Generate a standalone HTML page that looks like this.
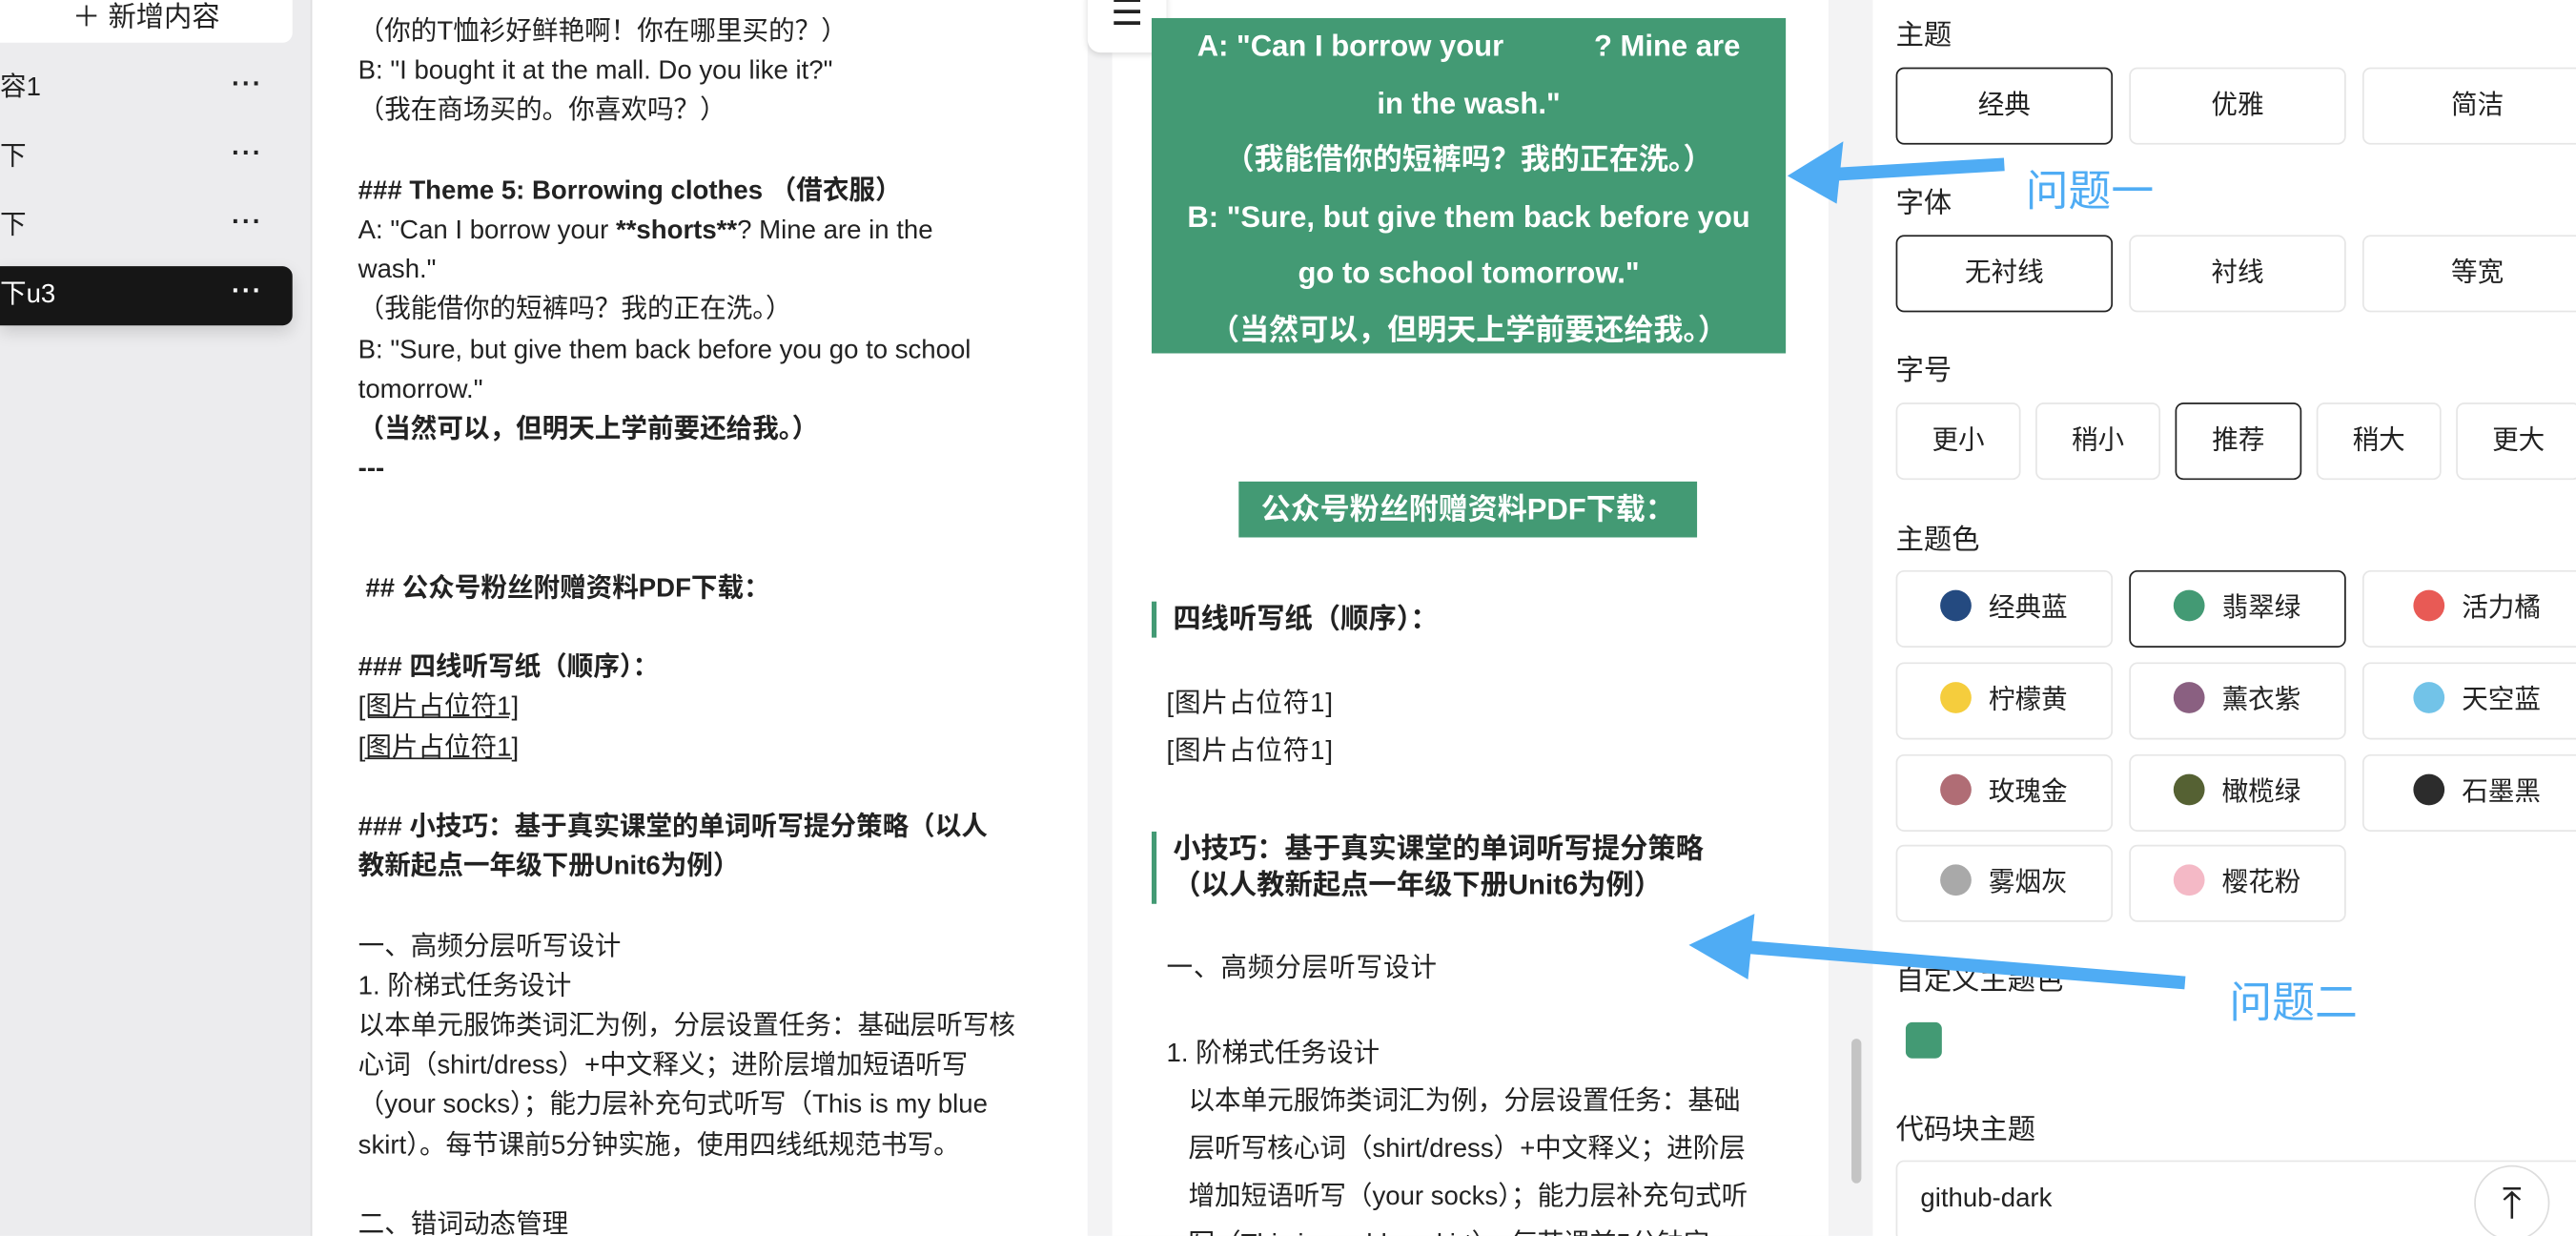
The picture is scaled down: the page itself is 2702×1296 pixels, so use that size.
<!DOCTYPE html>
<html><head><meta charset="utf-8"><style>
*{box-sizing:border-box;margin:0;padding:0}
html,body{width:2702px;height:1296px;overflow:hidden;background:#fff}
#w{width:1568px;height:752px;transform:scale(1.72321);transform-origin:0 0;position:relative;font-family:"Liberation Sans","Noto Sans CJK SC",sans-serif;color:#222}
.a{position:absolute}
#side{left:0;top:0;width:190px;height:752px;background:#ececee;border-right:1px solid #e0e0e0}
.it{position:absolute;left:0;width:178px;height:40px;font-size:16px;line-height:40px;padding-left:0}
.it span{position:absolute;right:18px;top:-2px;font-weight:bold;letter-spacing:1px}
#ed{left:191px;top:0;width:471px;height:752px;background:#fff;font-size:16px;line-height:24.2px;padding:8px 0 0 27px}
#ed b{font-weight:bold}
#pv{left:662px;top:0;width:478px;height:752px;background:#f3f3f4}
#card{left:677px;top:0;width:436px;height:752px;background:#fff}
.g{background:#439a74;color:#fff;font-weight:bold;text-align:center}
#rp{left:1140px;top:0;width:428px;height:752px;background:#fff;font-size:17px}
.btn{position:absolute;height:47px;border:1px solid #e6e6e6;border-radius:5px;font-size:16px;text-align:center;line-height:45px;background:#fff}
.sel{border:1.5px solid #222}
.dot{display:inline-block;width:19px;height:19px;border-radius:50%;vertical-align:-3px;margin-right:10px}
.lb{position:absolute;left:14px;font-size:17px}
.h{border-left:3px solid #439a74;padding-left:10px;font-weight:bold;font-size:16px}
</style></head><body><div id="w">
<div id="side" class="a">
 <div class="a" style="left:0;top:-6px;width:178px;height:32px;background:#fff;border-radius:0 0 6px 0;font-size:17px;text-align:center;line-height:34px">＋ 新增内容</div>
 <div class="it" style="top:34px">容1<span>···</span></div>
 <div class="it" style="top:76px">下<span>···</span></div>
 <div class="it" style="top:118px">下<span>···</span></div>
 <div class="it" style="top:162px;background:#161616;color:#fff;border-radius:0 6px 6px 0;height:36px;line-height:36px;box-shadow:0 4px 10px rgba(0,0,0,.15)">下u3<span style="color:#fff">···</span></div>
</div>
<div id="ed" class="a">
（你的T恤衫好鲜艳啊！你在哪里买的？）<br>B: "I bought it at the mall. Do you like it?"<br>（我在商场买的。你喜欢吗？）<br><br>
<b>### Theme 5: Borrowing clothes （借衣服）</b><br>A: "Can I borrow your <b>**shorts**</b>? Mine are in the<br>wash."<br>（我能借你的短裤吗？我的正在洗。）<br>B: "Sure, but give them back before you go to school<br>tomorrow."<br><b>（当然可以，但明天上学前要还给我。）<br>---</b><br><br><br>
<b>&nbsp;## 公众号粉丝附赠资料PDF下载：</b><br><br>
<b>### 四线听写纸（顺序）：</b><br><u>[图片占位符1]</u><br><u>[图片占位符1]</u><br><br>
<b>### 小技巧：基于真实课堂的单词听写提分策略（以人<br>教新起点一年级下册Unit6为例）</b><br><br>
一、高频分层听写设计<br>1. 阶梯式任务设计<br>以本单元服饰类词汇为例，分层设置任务：基础层听写核<br>心词（shirt/dress）+中文释义；进阶层增加短语听写<br>（your socks）；能力层补充句式听写（This is my blue<br>skirt）。每节课前5分钟实施，使用四线纸规范书写。<br><br>二、错词动态管理
</div>
<div id="pv" class="a"></div>
<div id="card" class="a"></div>
<div class="a" style="left:662px;top:-4px;width:48px;height:36px;background:#fff;border-radius:0 0 8px 8px;box-shadow:0 1px 4px rgba(0,0,0,.15);font-size:22px;text-align:center;line-height:24px">☰</div>
<div class="a g" style="left:701px;top:11px;width:386px;height:204px;font-size:18px;line-height:34.5px">A: "Can I borrow your &nbsp;&nbsp;&nbsp;&nbsp;&nbsp;&nbsp;&nbsp;&nbsp;&nbsp;&nbsp;? Mine are<br>in the wash."<br>（我能借你的短裤吗？我的正在洗。）<br>B: "Sure, but give them back before you<br>go to school tomorrow."<br>（当然可以，但明天上学前要还给我。）</div>
<div class="a g" style="left:754px;top:293px;width:279px;height:34px;font-size:18px;line-height:34px">公众号粉丝附赠资料PDF下载：</div>
<div class="a h" style="left:701px;top:366px;line-height:22px;font-size:17px">四线听写纸（顺序）：</div>
<div class="a" style="left:710px;top:414px;font-size:16px;line-height:29px;letter-spacing:.5px">[图片占位符1]<br>[图片占位符1]</div>
<div class="a h" style="left:701px;top:506px;line-height:22px;font-size:17px">小技巧：基于真实课堂的单词听写提分策略<br>（以人教新起点一年级下册Unit6为例）</div>
<div class="a" style="left:710px;top:575px;font-size:16px;letter-spacing:.5px">一、高频分层听写设计</div>
<div class="a" style="left:710px;top:627px;font-size:16px;line-height:29px">1. 阶梯式任务设计<br>&nbsp;&nbsp;&nbsp;以本单元服饰类词汇为例，分层设置任务：基础<br>&nbsp;&nbsp;&nbsp;层听写核心词（shirt/dress）+中文释义；进阶层<br>&nbsp;&nbsp;&nbsp;增加短语听写（your socks）；能力层补充句式听<br>&nbsp;&nbsp;&nbsp;写（This is my blue skirt）。每节课前5分钟实</div>
<div class="a" style="left:1127px;top:632px;width:6px;height:88px;background:#c4c4c4;border-radius:3px"></div>
<div id="rp" class="a">
 <div class="lb" style="top:7px">主题</div>
 <div class="btn sel" style="left:14px;top:41px;width:132px">经典</div>
 <div class="btn" style="left:156px;top:41px;width:132px">优雅</div>
 <div class="btn" style="left:298px;top:41px;width:140px">简洁</div>
 <div class="lb" style="top:109px">字体</div>
 <div class="btn sel" style="left:14px;top:143px;width:132px">无衬线</div>
 <div class="btn" style="left:156px;top:143px;width:132px">衬线</div>
 <div class="btn" style="left:298px;top:143px;width:140px">等宽</div>
 <div class="lb" style="top:211px">字号</div>
 <div class="btn" style="left:14px;top:245px;width:76px">更小</div>
 <div class="btn" style="left:99px;top:245px;width:76px">稍小</div>
 <div class="btn sel" style="left:184px;top:245px;width:77px">推荐</div>
 <div class="btn" style="left:270px;top:245px;width:76px">稍大</div>
 <div class="btn" style="left:355px;top:245px;width:76px">更大</div>
 <div class="lb" style="top:314px">主题色</div>
 <div class="btn" style="left:14px;top:347px;width:132px"><i class="dot" style="background:#244a80"></i>经典蓝</div>
 <div class="btn sel" style="left:156px;top:347px;width:132px"><i class="dot" style="background:#439a74"></i>翡翠绿</div>
 <div class="btn" style="left:298px;top:347px;width:140px"><i class="dot" style="background:#e85a55"></i>活力橘</div>
 <div class="btn" style="left:14px;top:403px;width:132px"><i class="dot" style="background:#f5cd3d"></i>柠檬黄</div>
 <div class="btn" style="left:156px;top:403px;width:132px"><i class="dot" style="background:#8a6081"></i>薰衣紫</div>
 <div class="btn" style="left:298px;top:403px;width:140px"><i class="dot" style="background:#72c3e8"></i>天空蓝</div>
 <div class="btn" style="left:14px;top:459px;width:132px"><i class="dot" style="background:#b06d75"></i>玫瑰金</div>
 <div class="btn" style="left:156px;top:459px;width:132px"><i class="dot" style="background:#556133"></i>橄榄绿</div>
 <div class="btn" style="left:298px;top:459px;width:140px"><i class="dot" style="background:#2c2c2c"></i>石墨黑</div>
 <div class="btn" style="left:14px;top:514px;width:132px"><i class="dot" style="background:#a9a9a9"></i>雾烟灰</div>
 <div class="btn" style="left:156px;top:514px;width:132px"><i class="dot" style="background:#f4b9c6"></i>樱花粉</div>
 <div class="lb" style="top:582px">自定义主题色</div>
 <div class="a" style="left:20px;top:622px;width:22px;height:22px;border-radius:4px;background:#439a74"></div>
 <div class="lb" style="top:673px">代码块主题</div>
 <div class="btn" style="left:14px;top:706px;width:420px;text-align:left;padding-left:14px;height:50px">github-dark</div>
 <div class="a" style="left:366px;top:709px;width:46px;height:46px;border-radius:50%;background:#fff;border:1px solid #ddd;font-size:26px;text-align:center;line-height:44px">⤒</div>
</div>
<svg class="a" style="left:0;top:0" width="1568" height="752">
 <path d="M1220 100 L1118 106" stroke="#4facf4" stroke-width="8" fill="none"/>
 <polygon points="1088,107 1122,86 1118,124" fill="#4facf4"/>
 <path d="M1330 598 L1060 576" stroke="#4facf4" stroke-width="8" fill="none"/>
 <polygon points="1028,575 1068,556 1064,596" fill="#4facf4"/>
</svg>
<div class="a" style="left:1233px;top:96px;font-size:26px;color:#4facf4">问题一</div>
<div class="a" style="left:1357px;top:590px;font-size:26px;color:#4facf4">问题二</div>
</div></body></html>
